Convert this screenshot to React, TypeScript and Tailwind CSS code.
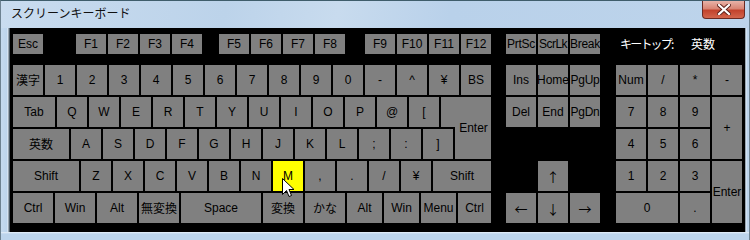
import React from "react";

type KeyProps = { label?: string; className?: string; cjk?: boolean };

function Key({ label, className = "", cjk = false }: KeyProps) {
  return (
    <div
      className={
        "bg-[#808080] flex items-center justify-center text-[12px] leading-none text-black whitespace-nowrap overflow-visible " +
        (cjk ? "font-['Noto_Sans_CJK_JP',sans-serif] " : "font-['Liberation_Sans','DejaVu_Sans',sans-serif] ") +
        className
      }
    >
      {label}
    </div>
  );
}

function Arrow({ label }: { label: string }) {
  return (
    <div className="bg-[#808080] flex items-center justify-center text-[13px] leading-none text-black font-['Noto_Sans_CJK_JP',sans-serif]">
      {label}
    </div>
  );
}

const row2 = ["1", "2", "3", "4", "5", "6", "7", "8", "9", "0", "-", "^", "¥", "BS"];
const row3 = ["Q", "W", "E", "R", "T", "Y", "U", "I", "O", "P", "@", "["];
const row4 = ["A", "S", "D", "F", "G", "H", "J", "K", "L", ";", ":", "]"];
const row5 = ["Z", "X", "C", "V", "B", "N", "M", ",", ".", "/", "¥"];

export default function App() {
  return (
    <div className="w-[750px] h-[240px] relative overflow-hidden flex flex-col bg-[#bed5ec]">
      {/* Title bar */}
      <div className="h-[28px] flex items-start bg-[linear-gradient(100deg,#c9dcef_0%,#bcd3ea_30%,#c8dbee_45%,#b9d1ea_60%,#bdd4eb_100%)] border-t border-[#3f5d6b] border-l border-r border-l-[#6d8291] border-r-[#6d8291]">
        <div className="pl-[10px] pt-[4px] text-[12px] leading-[16px] text-[#111] font-['Noto_Sans_CJK_JP',sans-serif]">
          スクリーンキーボード
        </div>
        <div className="ml-auto mr-[4px] w-[43px] h-[18px] rounded-b-[4px] border border-t-0 border-[#6b2a22] bg-[linear-gradient(180deg,#e8b3a8_0%,#d98574_45%,#c2432c_55%,#d2654c_100%)] flex items-center justify-center">
          <svg width="14" height="11" viewBox="0 0 14 11">
            <path d="M2 1 L12 10 M12 1 L2 10" stroke="#5a1f18" strokeWidth="4" strokeLinecap="square" />
            <path d="M2 1 L12 10 M12 1 L2 10" stroke="#ffffff" strokeWidth="2.2" strokeLinecap="square" />
          </svg>
        </div>
      </div>

      {/* Body */}
      <div className="flex h-[204px]">
        <div className="w-[10px] bg-[linear-gradient(90deg,#6d8291_0px,#6d8291_1px,#c4daef_1px,#bcd4ec_7px,#e8f1fa_8px,#4a5a66_9px)]" />
        <div className="w-[735px] bg-black pl-[3px] pt-[6px] flex flex-col">
          {/* Function row */}
          <div className="flex h-[20px]">
            <div className="w-[478px] flex">
              <Key label="Esc" className="w-[30px]" />
              <div className="w-[33px]" />
              <div className="flex gap-[2px]">
                <Key label="F1" className="w-[30px]" />
                <Key label="F2" className="w-[30px]" />
                <Key label="F3" className="w-[30px]" />
                <Key label="F4" className="w-[30px]" />
              </div>
              <div className="w-[17px]" />
              <div className="flex gap-[2px]">
                <Key label="F5" className="w-[30px]" />
                <Key label="F6" className="w-[30px]" />
                <Key label="F7" className="w-[30px]" />
                <Key label="F8" className="w-[30px]" />
              </div>
              <div className="w-[20px]" />
              <div className="flex gap-[2px]">
                <Key label="F9" className="w-[30px]" />
                <Key label="F10" className="w-[30px]" />
                <Key label="F11" className="w-[30px]" />
                <Key label="F12" className="w-[30px]" />
              </div>
            </div>
            <div className="ml-[15px] flex gap-[2px]">
              <Key label="PrtSc" className="w-[30px] tracking-[-0.3px]" />
              <Key label="ScrLk" className="w-[30px] tracking-[-0.5px]" />
              <Key label="Break" className="w-[30px] tracking-[-0.3px]" />
            </div>
            <div className="ml-[20px] flex items-center text-white text-[12px] font-['Noto_Sans_CJK_JP',sans-serif] leading-none">
              <span className="w-[71px] tracking-[-1.8px]">キートップ:</span>
              <span>英数</span>
            </div>
          </div>

          {/* Main rows */}
          <div className="flex mt-[11px]">
            <div className="w-[478px] flex flex-col gap-[2px]">
              <div className="flex gap-[2px] h-[30px]">
                <Key label="漢字" cjk className="w-[30px]" />
                {row2.map((k) => (
                  <Key key={k} label={k} className="w-[30px]" />
                ))}
              </div>
              <div className="flex gap-[2px] h-[30px]">
                <Key label="Tab" className="w-[42px]" />
                {row3.map((k) => (
                  <Key key={k} label={k} className="w-[30px]" />
                ))}
                <div className="w-[50px] bg-[#808080]" />
              </div>
              <div className="flex gap-[2px] h-[30px]">
                <Key label="英数" cjk className="w-[56px]" />
                {row4.map((k) => (
                  <Key key={k} label={k} className="w-[30px]" />
                ))}
                <div className="w-[36px] h-[32px] -mt-[2px] self-start bg-[#808080] flex justify-center">
                  <span className="-mt-[5px] pl-[1px] text-[12px] leading-[12px] text-black font-['Liberation_Sans',sans-serif]">
                    Enter
                  </span>
                </div>
              </div>
              <div className="flex gap-[2px] h-[30px]">
                <Key label="Shift" className="w-[66px]" />
                {row5.map((k, i) => (
                  <Key key={i} label={k} className={"w-[30px]" + (k === "M" ? " !bg-[#ffff00]" : "")} />
                ))}
                <Key label="Shift" className="w-[58px]" />
              </div>
              <div className="flex gap-[2px] h-[30px]">
                <Key label="Ctrl" className="w-[40px]" />
                <Key label="Win" className="w-[40px]" />
                <Key label="Alt" className="w-[40px]" />
                <Key label="無変換" cjk className="w-[40px]" />
                <Key label="Space" className="w-[80px]" />
                <Key label="変換" cjk className="w-[40px]" />
                <Key label="かな" cjk className="w-[40px]" />
                <Key label="Alt" className="w-[35px]" />
                <Key label="Win" className="w-[35px]" />
                <Key label="Menu" className="w-[35px]" />
                <Key label="Ctrl" className="w-[33px]" />
              </div>
            </div>

            {/* Navigation cluster */}
            <div className="ml-[15px] grid grid-cols-[30px_30px_30px] auto-rows-[30px] gap-[2px]">
              <Key label="Ins" />
              <Key label="Home" />
              <Key label="PgUp" className="tracking-[-0.3px]" />
              <Key label="Del" />
              <Key label="End" />
              <Key label="PgDn" className="tracking-[-0.3px]" />
              <div />
              <div />
              <div />
              <div />
              <Arrow label="↑" />
              <div />
              <Arrow label="←" />
              <Arrow label="↓" />
              <Arrow label="→" />
            </div>

            {/* Numpad */}
            <div className="ml-[16px] grid grid-cols-[30px_30px_30px_30px] auto-rows-[30px] gap-[2px]">
              <Key label="Num" />
              <Key label="/" />
              <Key label="*" />
              <Key label="-" />
              <Key label="7" />
              <Key label="8" />
              <Key label="9" />
              <Key label="+" className="row-span-2" />
              <Key label="4" />
              <Key label="5" />
              <Key label="6" />
              <Key label="1" />
              <Key label="2" />
              <Key label="3" />
              <Key label="Enter" className="row-span-2" />
              <Key label="0" className="col-span-2" />
              <Key label="." />
            </div>
          </div>
        </div>
        <div className="w-[5px] bg-[linear-gradient(90deg,#4a5a66_0px,#e8f1fa_1px,#bcd4ec_2px,#bcd4ec_4px,#6d8291_4px)]" />
      </div>
      <div className="flex-1 bg-[linear-gradient(180deg,#e8f1fa_0px,#bcd4ec_2px,#bcd4ec_100%)] border-l border-r border-[#6d8291]" />

      {/* Mouse cursor */}
      <svg className="absolute left-[282px] top-[178px]" width="13" height="20" viewBox="0 0 13 20">
        <path
          d="M0.5 0.5 L0.5 16.5 L4.5 12.5 L7 18.5 L9.5 17.5 L7 11.5 L12 11.5 Z"
          fill="#ffffff"
          stroke="#000000"
          strokeWidth="1"
          strokeLinejoin="miter"
        />
      </svg>
    </div>
  );
}
